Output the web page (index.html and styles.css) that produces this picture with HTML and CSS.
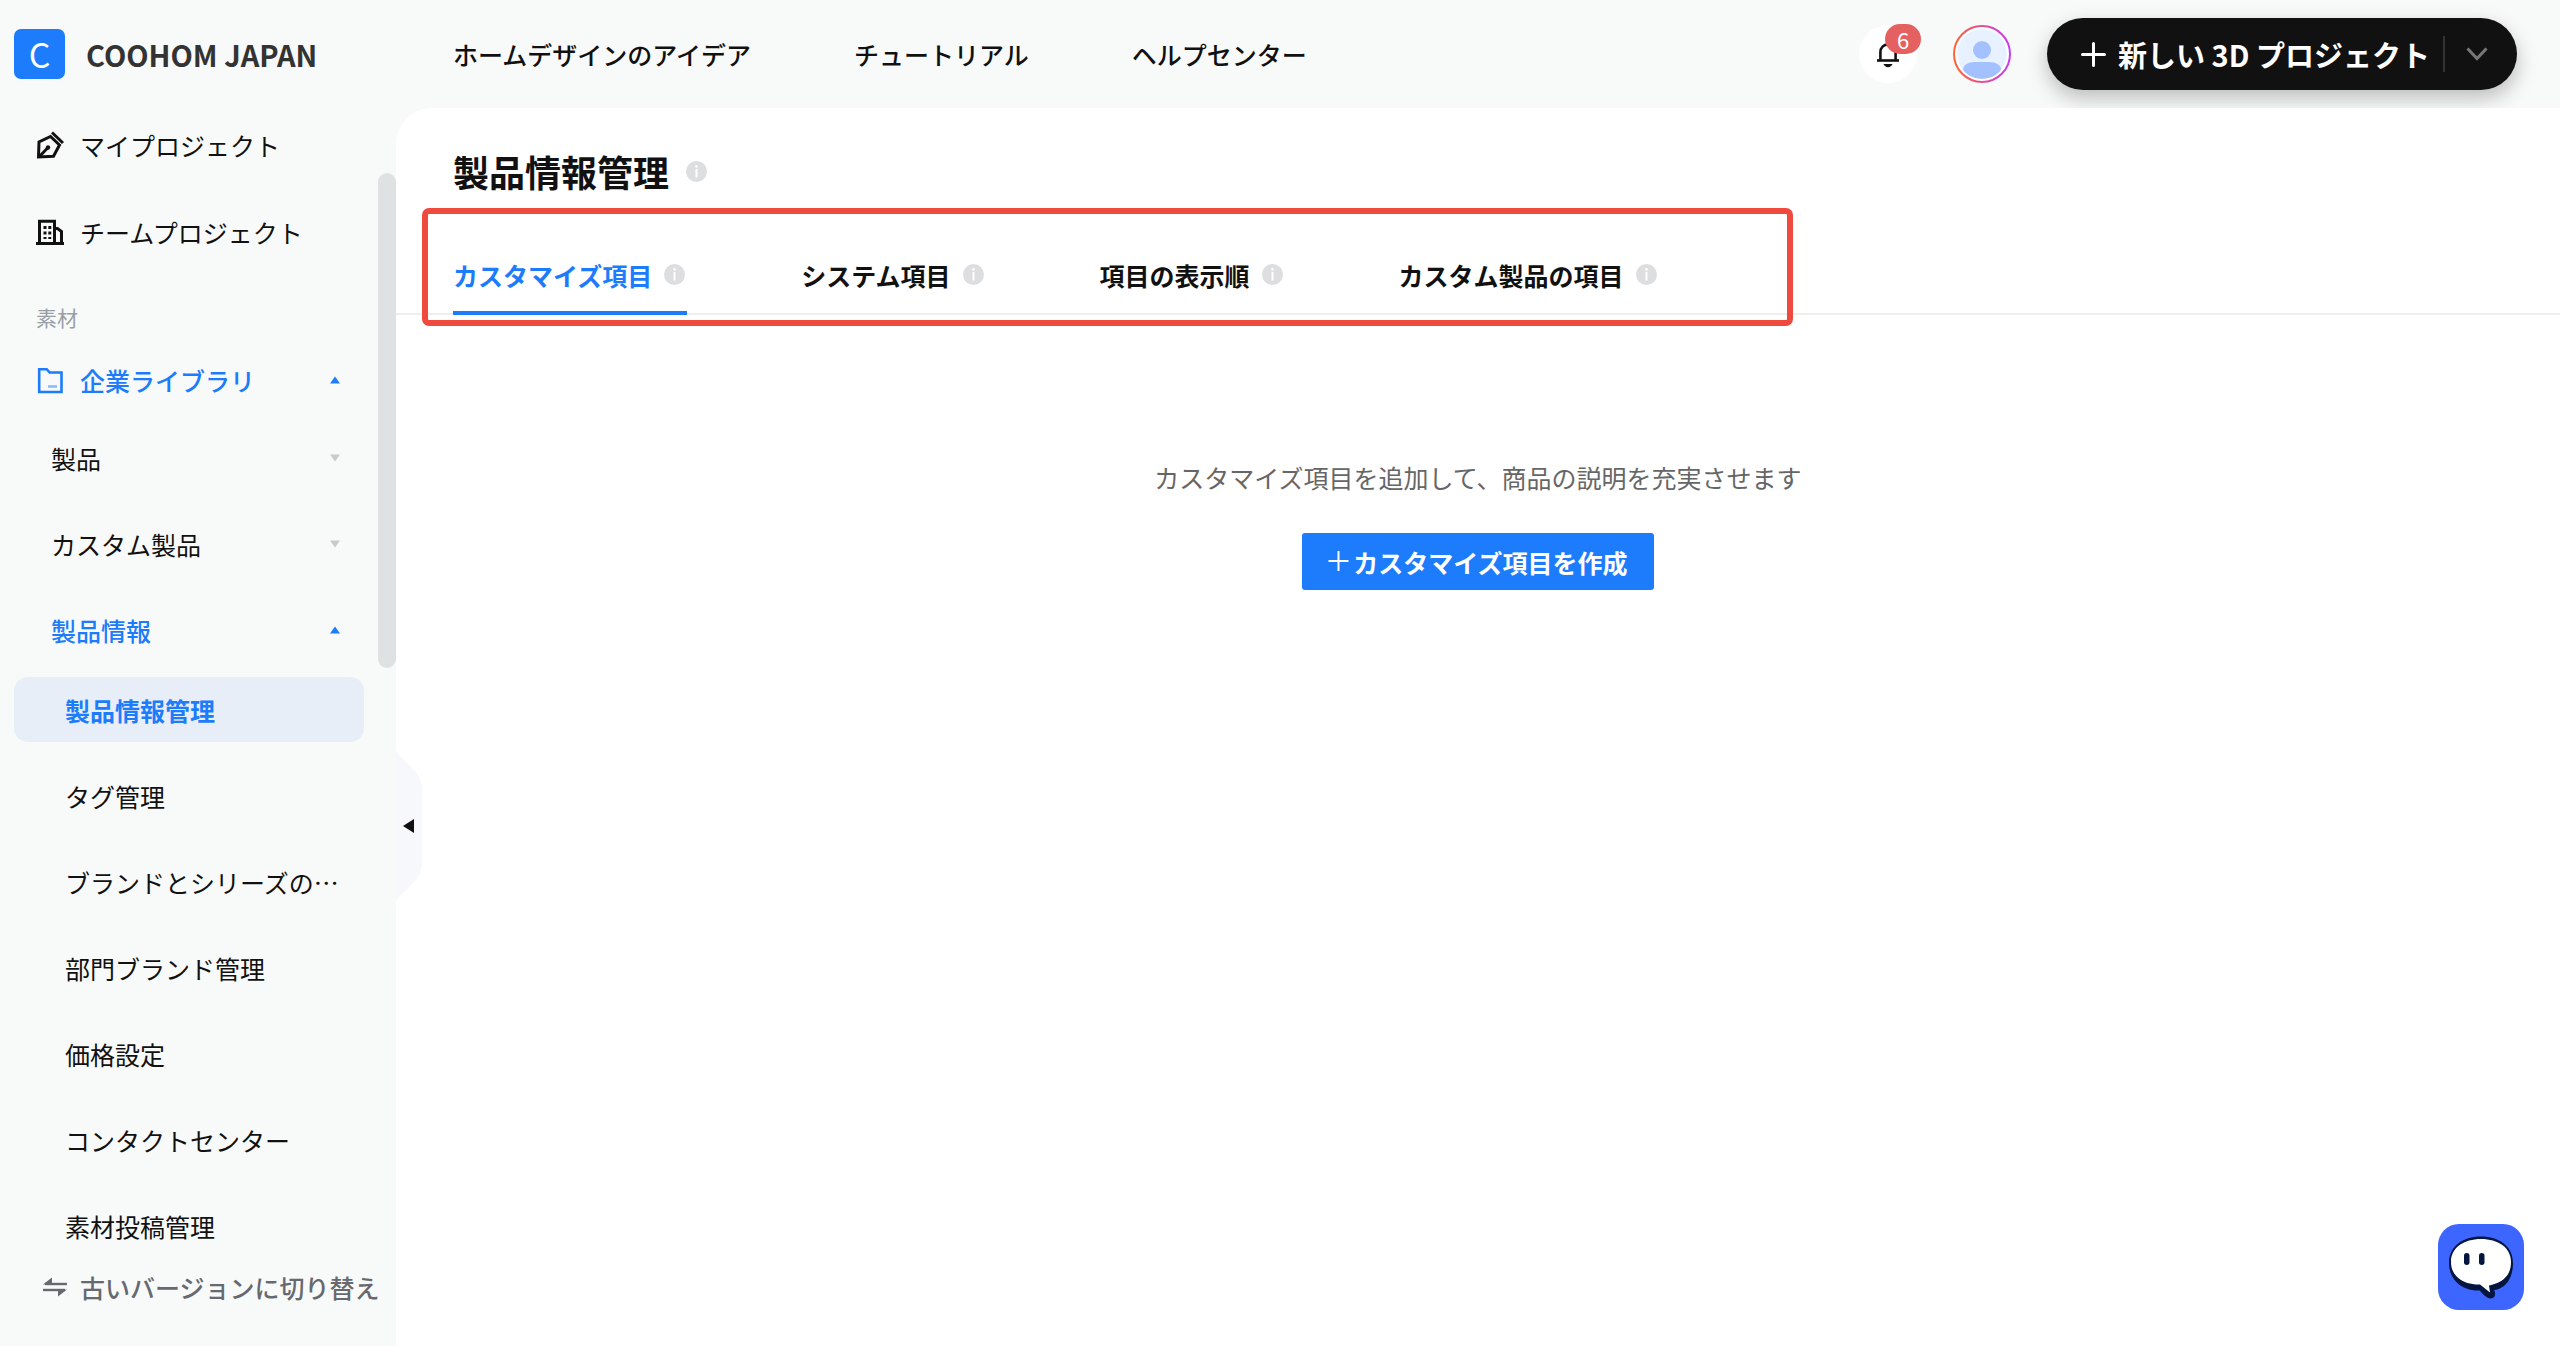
FILE: index.html
```html
<!DOCTYPE html>
<html lang="ja">
<head>
    <meta charset="UTF-8">
    <meta name="viewport" content="width=device-width, initial-scale=1.0">
    <title>製品情報管理 - COOHOM JAPAN</title>
    <link rel="stylesheet" href="styles.css">
</head>
<body>
    <svg class="sprite" aria-hidden="true">
        <symbol id="icon-info" viewBox="0 0 21 21">
            <circle cx="10.5" cy="10.5" r="10.5" fill="#dcdee0"/>
            <circle cx="10.5" cy="5.4" r="1.3" fill="#fff"/>
            <path d="M10.5 8v8.500" fill="none" stroke="#fff" stroke-width="2"/>
        </symbol>
        <symbol id="icon-caret" viewBox="0 0 10 8">
            <path d="M5 0.5L10 7.5H0z" fill="currentColor"/>
        </symbol>
    </svg>

    <header class="header">
        <a class="brand" href="#">
            <span class="brand-logo">C</span>
            <span class="brand-name">COOHOM JAPAN</span>
        </a>
        <nav class="top-nav">
            <a href="#">ホームデザインのアイデア</a>
            <a href="#">チュートリアル</a>
            <a href="#">ヘルプセンター</a>
        </nav>
        <div class="header-actions">
            <button class="bell" aria-label="通知">
                <svg width="24" height="28" viewBox="0 0 24 28" fill="none" stroke="#111" stroke-width="2.6">
                    <path d="M1 20.5h22"/>
                    <path d="M4.4 20V12.2C4.4 7.6 7.6 4.4 12 4.4s7.6 3.2 7.6 7.8V20"/>
                    <path d="M12 1.5v3"/>
                    <path d="M7.5 24h9c-.8 2-2.4 3.2-4.5 3.2S8.300 26 7.5 24z" fill="#111" stroke="none"/>
                </svg>
                <span class="badge">6</span>
            </button>
            <button class="avatar" aria-label="アカウント">
                <svg width="58" height="58" viewBox="0 0 58 58">
                    <defs>
                        <linearGradient id="ring" x1="0" y1="0" x2="1" y2="0">
                            <stop offset="0" stop-color="#ff6432"/>
                            <stop offset="1" stop-color="#c63cf0"/>
                        </linearGradient>
                        <clipPath id="face"><circle cx="29" cy="29" r="25"/></clipPath>
                    </defs>
                    <circle cx="29" cy="29" r="28" fill="#fff" stroke="url(#ring)" stroke-width="2"/>
                    <g clip-path="url(#face)">
                        <circle cx="29" cy="29" r="25" fill="#e8f1ff"/>
                        <circle cx="29" cy="25" r="9" fill="#a3c0ff"/>
                        <path d="M10 45c0-5 5-8 12-8h14c7 0 12 3 12 8-4 6-10 9-19 9s-15-3-19-9z" fill="#a3c0ff"/>
                    </g>
                </svg>
            </button>
            <div class="new-project">
                <button class="new-project-main">
                    <svg width="25" height="25" viewBox="0 0 25 25" stroke="#fff" stroke-width="3" stroke-linecap="round">
                        <path d="M12.500 1.500v22M1.500 12.500h22"/>
                    </svg>
                    <span>新しい 3D プロジェクト</span>
                </button>
                <button class="new-project-more" aria-label="その他">
                    <svg width="22" height="14" viewBox="0 0 22 14" fill="none" stroke="#777" stroke-width="3">
                        <path d="M1.500 1.500L11 11.500L20.500 1.500"/>
                    </svg>
                </button>
            </div>
        </div>
    </header>

    <div class="layout">
        <aside class="sidebar">
            <ul class="menu">
                <li><a href="#">
                    <svg class="menu-icon" viewBox="0 0 28 28" fill="none" stroke="#111" stroke-width="3">
                        <path d="M2.500 26L3 11L14.500 5.500L23.500 14L17.500 25.200z"/>
                        <path d="M3 26L12 16.500"/>
                        <circle cx="12" cy="16.500" r="2.200" fill="#111" stroke="none"/>
                        <path d="M16 1.500L27 12"/>
                    </svg>
                    <span>マイプロジェクト</span>
                </a></li>
                <li><a href="#">
                    <svg class="menu-icon" viewBox="0 0 28 28" fill="none" stroke="#111" stroke-width="3">
                        <path d="M0 25.500h28"/>
                        <path d="M3.500 25V3.300h15V25"/>
                        <path d="M19 10.500h2.500l4 3V25"/>
                        <path d="M9 8v13M13.800 8v13" stroke-dasharray="3 2.500"/>
                    </svg>
                    <span>チームプロジェクト</span>
                </a></li>
            </ul>

            <h2 class="menu-heading">素材</h2>

            <ul class="menu">
                <li>
                    <a class="open" href="#">
                        <svg class="menu-icon" viewBox="0 0 28 28" fill="none" stroke="#1c7cfb" stroke-width="2.6">
                            <path d="M3.200 3.200h7.500l3 3.300H25.500V26H3.200z"/>
                            <path d="M12 20.500h9" opacity=".5"/>
                        </svg>
                        <span>企業ライブラリ</span>
                        <svg class="caret"><use href="#icon-caret"/></svg>
                    </a>
                    <ul class="menu menu-sub">
                        <li><a href="#"><span>製品</span><svg class="caret down"><use href="#icon-caret"/></svg></a></li>
                        <li><a href="#"><span>カスタム製品</span><svg class="caret down"><use href="#icon-caret"/></svg></a></li>
                        <li>
                            <a class="open" href="#"><span>製品情報</span><svg class="caret"><use href="#icon-caret"/></svg></a>
                            <ul class="menu menu-leaf">
                                <li><a class="active" href="#">製品情報管理</a></li>
                                <li><a href="#">タグ管理</a></li>
                                <li><a href="#">ブランドとシリーズの…</a></li>
                                <li><a href="#">部門ブランド管理</a></li>
                                <li><a href="#">価格設定</a></li>
                                <li><a href="#">コンタクトセンター</a></li>
                                <li><a href="#">素材投稿管理</a></li>
                            </ul>
                        </li>
                    </ul>
                </li>
            </ul>

            <a class="switch-version" href="#">
                <svg width="24" height="20" viewBox="0 0 24 20" fill="none" stroke="#666970" stroke-width="2.4">
                    <path d="M24 7H2"/>
                    <path d="M0 7.500L9 0.500V7z" fill="#666970" stroke="none"/>
                    <path d="M0 13h22"/>
                    <path d="M24 12.500L15 19.500V13z" fill="#666970" stroke="none"/>
                </svg>
                <span>古いバージョンに切り替え</span>
            </a>
            <div class="scroll-thumb"></div>
        </aside>

        <main class="main">
            <button class="collapse" aria-label="サイドバーを閉じる">
                <svg width="26" height="152" viewBox="0 0 26 152">
                    <path d="M0 0C2 6 10 11 17 19C23 25 26 31 26 40V112C26 121 23 127 17 133C10 141 2 146 0 152z" fill="#f7f8fb"/>
                    <path d="M7 76L18 69V83z" fill="#111"/>
                </svg>
            </button>

            <div class="page-title">
                <h1>製品情報管理</h1>
                <svg class="info"><use href="#icon-info"/></svg>
            </div>

            <div class="tabs" role="tablist">
                <button class="tab selected" role="tab" aria-selected="true">カスタマイズ項目<svg class="info"><use href="#icon-info"/></svg></button>
                <button class="tab" role="tab">システム項目<svg class="info"><use href="#icon-info"/></svg></button>
                <button class="tab" role="tab">項目の表示順<svg class="info"><use href="#icon-info"/></svg></button>
                <button class="tab" role="tab">カスタム製品の項目<svg class="info"><use href="#icon-info"/></svg></button>
                <div class="highlight"></div>
            </div>

            <section class="empty">
                <p>カスタマイズ項目を追加して、商品の説明を充実させます</p>
                <button class="create">
                    <svg width="21" height="21" viewBox="0 0 21 21" stroke="#fff" stroke-width="2">
                        <path d="M10.500 0v20M0.500 10h20"/>
                    </svg>
                    <span>カスタマイズ項目を作成</span>
                </button>
            </section>
        </main>
    </div>

    <button class="chat" aria-label="チャット">
        <svg width="86" height="86" viewBox="0 0 86 86">
            <path d="M43 12.500C61 12.500 75 22 75 39C75 55 67 65 56 66C58 69 57.500 74 53 74.500C49 75 45 70 41.500 66.500C24 67 11 56 11 39C11 22 25 12.500 43 12.500z" fill="#04153f"/>
            <path d="M43 15C60 15 73 23.500 73 38C73 52 64 59 51 61.500L52 68.500L42 60.500C25 61 13 52 13 38C13 23.500 26 15 43 15z" fill="#fff"/>
            <rect x="26" y="29" width="5.500" height="12" rx="2.750" fill="#04153f"/>
            <rect x="41" y="29" width="5.500" height="12" rx="2.750" fill="#04153f"/>
        </svg>
    </button>
</body>
</html>
```

FILE: styles.css
```css
* {
    box-sizing: border-box;
}

body {
    margin: 0;
    min-height: 100vh;
    display: flex;
    flex-direction: column;
    background: #f8faf9;
    color: #111;
    font-family: "Noto Sans CJK JP", sans-serif;
    font-size: 25px;
    line-height: 36px;
}

a {
    color: inherit;
    text-decoration: none;
}

button {
    padding: 0;
    border: none;
    background: none;
    color: inherit;
    font: inherit;
    cursor: pointer;
}

svg {
    display: block;
    flex-shrink: 0;
}

.sprite {
    position: absolute;
    width: 0;
    height: 0;
}

.info {
    width: 21px;
    height: 21px;
}

/* Header */
.header {
    display: flex;
    align-items: center;
    height: 108px;
    padding-right: 43px;
}

.brand {
    display: flex;
    align-items: center;
    gap: 21px;
    width: 396px;
    padding-left: 14px;
}

.brand-logo {
    width: 51px;
    height: 50px;
    border-radius: 7px;
    background: #1c7cfb;
    color: #fff;
    font-size: 34px;
    line-height: 50px;
    text-align: center;
}

.brand-name {
    color: #333;
    font-size: 29px;
    font-weight: 700;
}

.top-nav {
    display: flex;
    gap: 103px;
    padding-left: 57px;
    font-weight: 500;
}

.header-actions {
    display: flex;
    align-items: center;
    gap: 36px;
    margin-left: auto;
}

.bell {
    position: relative;
    display: flex;
    align-items: center;
    justify-content: center;
    width: 58px;
    height: 58px;
    border-radius: 50%;
    background: #fff;
}

.badge {
    position: absolute;
    top: -1px;
    right: -4px;
    width: 36px;
    height: 30px;
    border-radius: 15px;
    background: #e56060;
    color: #fff;
    font-size: 22px;
    line-height: 30px;
    text-align: center;
}

.new-project {
    display: flex;
    align-items: center;
    height: 72px;
    border-radius: 36px;
    background: #111;
    box-shadow: 0 8px 20px rgba(0, 0, 0, 0.25);
    color: #fff;
}

.new-project-main {
    display: flex;
    align-items: center;
    gap: 12px;
    padding: 0 13px 0 34px;
    font-size: 29px;
    font-weight: 700;
}

.new-project-more {
    height: 36px;
    padding: 0 29px 0 21px;
    border-left: 2px solid #333;
}

/* Sidebar */
.layout {
    position: relative;
    flex: 1;
    display: flex;
}

.sidebar {
    position: relative;
    display: flex;
    flex-direction: column;
    flex-shrink: 0;
    width: 396px;
    padding: 5px 0 39px;
}

.scroll-thumb {
    position: absolute;
    top: 65px;
    right: 0;
    width: 18px;
    height: 495px;
    border-radius: 9px;
    background: #dfe1e3;
}

.menu {
    display: flex;
    flex-direction: column;
    gap: 23px;
    margin: 0;
    padding: 0 32px 0 14px;
    list-style: none;
}

.menu a {
    display: flex;
    align-items: center;
    height: 64px;
    padding: 0 24px 0 22px;
    border-radius: 14px;
}

.menu .open {
    color: #1c7cfb;
    font-weight: 500;
}

.menu-icon {
    width: 28px;
    height: 28px;
    margin-right: 16px;
}

.menu-heading {
    margin: 38px 0 16px;
    padding-left: 36px;
    color: #999ea5;
    font-size: 21px;
    font-weight: 400;
    line-height: 30px;
}

.caret {
    width: 10px;
    height: 8px;
    margin-left: auto;
}

.caret.down {
    color: #c8cacf;
    transform: rotate(180deg);
}

.menu-sub {
    gap: 22px;
    margin-top: 14px;
    padding: 0;
}

.menu-sub a {
    padding-left: 37px;
}

.menu-leaf {
    gap: 21px;
    margin-top: 15px;
    padding: 0;
}

.menu-leaf a {
    height: 65px;
    padding: 0 0 0 51px;
    white-space: nowrap;
}

.menu-leaf .active {
    background: #e7eef8;
    color: #1c7cfb;
    font-weight: 700;
}

.switch-version {
    display: flex;
    align-items: center;
    gap: 13px;
    height: 40px;
    margin-top: auto;
    padding-left: 43px;
    color: #666970;
    font-weight: 500;
    white-space: nowrap;
}

/* Main */
.main {
    position: relative;
    flex: 1;
    min-width: 0;
    border-radius: 36px 0 0 0;
    background: #fff;
}

.collapse {
    position: absolute;
    top: 642px;
    left: 0;
}

.page-title {
    display: flex;
    align-items: center;
    gap: 17px;
    padding: 35px 57px 0;
}

.page-title h1 {
    margin: 0;
    font-size: 36px;
    font-weight: 700;
    line-height: 56px;
}

.tabs {
    position: relative;
    display: flex;
    gap: 114px;
    margin-top: 39px;
    padding: 0 57px;
    border-bottom: 2px solid #eee;
}

.tab {
    display: flex;
    align-items: center;
    gap: 12px;
    height: 77px;
    margin-bottom: -2px;
    padding: 0 2px 0 0;
    border-bottom: 4px solid transparent;
    font-weight: 700;
}

.tab.selected {
    border-bottom-color: #1c7cfb;
    color: #1c7cfb;
}

/* red frame drawn over the tab bar */
.highlight {
    position: absolute;
    top: -30px;
    left: 26px;
    width: 1371px;
    height: 118px;
    border: 6px solid #f04a3e;
    border-radius: 7px;
    pointer-events: none;
}

.empty {
    display: flex;
    flex-direction: column;
    align-items: center;
    gap: 38px;
    padding: 144px 57px 0;
}

.empty p {
    margin: 0;
    color: #666;
}

.create {
    display: flex;
    align-items: center;
    gap: 4px;
    height: 57px;
    padding: 0 26px;
    border-radius: 3px;
    background: #1c7cfb;
    color: #fff;
    font-weight: 700;
}

.chat {
    position: fixed;
    right: 36px;
    bottom: 36px;
    border-radius: 21px;
    background: #3c66ff;
}
```
